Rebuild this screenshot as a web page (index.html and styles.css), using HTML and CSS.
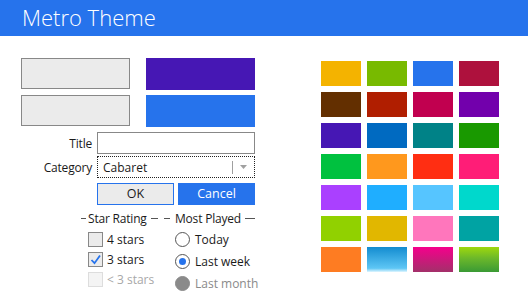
FILE: index.html
```html
<!DOCTYPE html>
<html lang="en">
<head>
    <meta charset="UTF-8">
    <meta name="viewport" content="width=device-width, initial-scale=1.0">
    <title>Metro Theme</title>
    <link rel="stylesheet" href="styles.css">
</head>
<body>
    <header class="title-bar">Metro Theme</header>

    <main class="content">
        <section class="left">
            <div class="swatch-row">
                <div class="box neutral"></div>
                <div class="box purple"></div>
            </div>
            <div class="swatch-row">
                <div class="box neutral"></div>
                <div class="box blue"></div>
            </div>

            <div class="fields">
                <div class="field">
                    <span class="label">Title</span>
                    <div class="input"></div>
                </div>
                <div class="field">
                    <span class="label">Category</span>
                    <div class="combo">
                        <span class="combo-text">Cabaret</span>
                        <span class="combo-sep"></span>
                        <svg class="combo-arrow" width="7" height="4" viewBox="0 0 7 4"><path d="M0 0h7L3.5 4z" fill="#a0a0a0"/></svg>
                    </div>
                </div>
                <div class="buttons">
                    <div class="btn ok">OK</div>
                    <div class="btn cancel">Cancel</div>
                </div>
            </div>

            <div class="groups">
                <div class="group stars">
                    <div class="group-head"><span class="dash"></span><span>Star Rating</span><span class="line"></span></div>
                    <div class="check-list">
                        <div class="check"><span class="cbox"></span>4 stars</div>
                        <div class="check"><span class="cbox">
                            <svg width="13" height="13" viewBox="0 0 13 13"><path d="M2.5 7l3 3.2L11 2.5" fill="none" stroke="#2673ec" stroke-width="1.8"/></svg>
                        </span>3 stars</div>
                        <div class="check disabled"><span class="cbox"></span>&lt; 3 stars</div>
                    </div>
                </div>
                <div class="group played">
                    <div class="group-head"><span class="dash"></span><span>Most Played</span><span class="line"></span></div>
                    <div class="radio-list">
                        <div class="radio"><span class="rbox"></span>Today</div>
                        <div class="radio checked"><span class="rbox"></span>Last week</div>
                        <div class="radio disabled"><span class="rbox"></span>Last month</div>
                    </div>
                </div>
            </div>
        </section>

        <section class="tiles">
            <div class="tile" style="background:#f4b300"></div>
            <div class="tile" style="background:#78ba00"></div>
            <div class="tile" style="background:#2673ec"></div>
            <div class="tile" style="background:#ae113d"></div>
            <div class="tile" style="background:#632f00"></div>
            <div class="tile" style="background:#b01e00"></div>
            <div class="tile" style="background:#c1004f"></div>
            <div class="tile" style="background:#7200ac"></div>
            <div class="tile" style="background:#4617b4"></div>
            <div class="tile" style="background:#006ac1"></div>
            <div class="tile" style="background:#008287"></div>
            <div class="tile" style="background:#199900"></div>
            <div class="tile" style="background:#00c13f"></div>
            <div class="tile" style="background:#ff981d"></div>
            <div class="tile" style="background:#ff2e12"></div>
            <div class="tile" style="background:#ff1d77"></div>
            <div class="tile" style="background:#aa40ff"></div>
            <div class="tile" style="background:#1faeff"></div>
            <div class="tile" style="background:#56c5ff"></div>
            <div class="tile" style="background:#00d8cc"></div>
            <div class="tile" style="background:#91d100"></div>
            <div class="tile" style="background:#e1b700"></div>
            <div class="tile" style="background:#ff76bc"></div>
            <div class="tile" style="background:#00a3a3"></div>
            <div class="tile" style="background:#fe7c22"></div>
            <div class="tile sky"></div>
            <div class="tile berry"></div>
            <div class="tile grass"></div>
        </section>
    </main>
</body>
</html>
```

FILE: styles.css
```css
* {
    margin: 0;
    padding: 0;
    box-sizing: border-box;
}

body {
    width: 528px;
    height: 297px;
    background: #fff;
    color: #1a1a1a;
    font-family: "Open Sans", "Noto Sans", sans-serif;
    font-size: 12px;
    overflow: hidden;
}

.title-bar {
    height: 36px;
    padding-left: 22px;
    background: #2673ec;
    color: #fff;
    font-weight: 300;
    font-size: 22px;
    line-height: 35px;
}

.content {
    display: flex;
    padding-left: 21px;
}

/* colonne de gauche */
.left {
    width: 234px;
    flex-shrink: 0;
    padding-top: 22px;
}

.swatch-row {
    display: flex;
    gap: 16px;
    margin-bottom: 5px;
}

.box {
    width: 109px;
    height: 32px;
}

.box.neutral {
    height: 31px;
    background: #ebebeb;
    border: 1px solid #888;
}

.box.purple { background: #4617b4; }
.box.blue { background: #2673ec; }

.fields {
    margin-top: 3px;
}

.field {
    display: flex;
    align-items: center;
    margin-bottom: 2px;
}

.label {
    width: 76px;
    flex-shrink: 0;
    padding-right: 5px;
    text-align: right;
    letter-spacing: -0.2px;
}

.input {
    width: 158px;
    flex-shrink: 0;
    height: 22px;
    border: 1px solid #888;
    background: #fff;
}

.combo {
    width: 158px;
    flex-shrink: 0;
    height: 22px;
    border: 1px dotted #222;
    display: flex;
    align-items: center;
    padding-left: 5px;
}

.combo-text {
    flex: 1;
}

.combo-sep {
    width: 1px;
    height: 13px;
    background: #a0a0a0;
    margin-right: 7px;
}

.combo-arrow {
    margin-right: 7px;
}

.buttons {
    display: flex;
    gap: 4px;
    margin: 5px 0 0 76px;
}

.btn {
    width: 77px;
    height: 22px;
    line-height: 20px;
    text-align: center;
    font-size: 12.5px;
}

.btn.ok {
    background: #ebebeb;
    border: 1px solid #2673ec;
}

.btn.cancel {
    background: #2673ec;
    border: 1px solid #2673ec;
    color: #fff;
}

/* groupes */
.groups {
    display: flex;
    gap: 6px;
    margin: 3px 0 0 60px;
    white-space: nowrap;
}

.group.stars { width: 79px; }
.group.played { width: 91px; }

.group-head {
    display: flex;
    align-items: center;
    height: 20px;
    letter-spacing: -0.2px;
}

.group-head .dash {
    width: 5px;
    height: 1px;
    background: #555;
    margin-right: 2px;
}

.group.played .group-head .dash {
    width: 6px;
    margin-right: 5px;
}

.group-head .line {
    flex: 1;
    height: 1px;
    background: #555;
    margin-left: 4px;
}

.check-list,
.radio-list {
    display: flex;
    flex-direction: column;
}

.check-list {
    padding: 4px 0 0 7px;
    gap: 5px;
}

.radio-list {
    padding: 4px 0 0 11px;
    gap: 7px;
}

.check,
.radio {
    display: flex;
    align-items: center;
    height: 15px;
}

.cbox {
    width: 15px;
    height: 15px;
    flex-shrink: 0;
    border: 1px solid #888;
    background: #ebebeb;
    margin-right: 4px;
    display: flex;
    align-items: center;
    justify-content: center;
}

.check.disabled { color: #a8a8a8; }

.check.disabled .cbox {
    border-color: #ddd;
    background: #f4f4f4;
}

.rbox {
    width: 15px;
    height: 15px;
    flex-shrink: 0;
    border: 1px solid #555;
    border-radius: 50%;
    background: #fff;
    margin-right: 5px;
    display: flex;
    align-items: center;
    justify-content: center;
}

.radio.checked .rbox::after {
    content: "";
    width: 7px;
    height: 7px;
    border-radius: 50%;
    background: #2673ec;
}

.radio.disabled { color: #8a8a8a; }

.radio.disabled .rbox {
    border-color: #8a8a8a;
    background: #8a8a8a;
}

/* tuiles de couleur */
.tiles {
    display: grid;
    grid-template-columns: repeat(4, 40px);
    grid-auto-rows: 25px;
    gap: 6px;
    margin: 25px 0 0 66px;
}

.tile.sky {
    background: linear-gradient(#138cd0, #5ec6f5 85%, #e0f6ff);
}

.tile.berry {
    background: linear-gradient(#f5008c, #a3306a);
}

.tile.grass {
    background: linear-gradient(#9ed80e, #6cb82a 45%, #3a9a35);
}
```
